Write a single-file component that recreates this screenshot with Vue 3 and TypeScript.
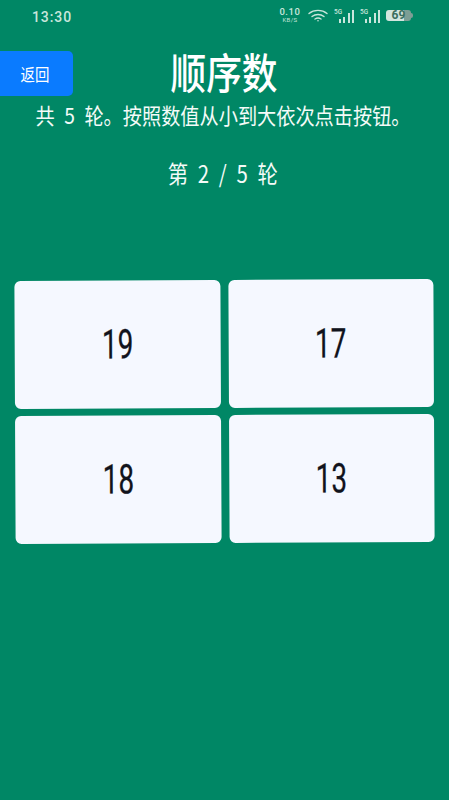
<script setup lang="ts">
const cards: number[] = [19, 17, 18, 13]
const bars = [4, 7, 10, 13]
</script>

<template>
  <main class="page">
    <header class="status">
      <span class="time">13:30</span>
      <div class="indicators">
        <div class="speed"><b>0.10</b><small>KB/S</small></div>
        <svg class="wifi" width="20" height="13" viewBox="0 0 20 13" fill="none" stroke="currentColor" stroke-width="1.4" stroke-linecap="round">
          <path d="M1 4.5C6 .3 14 .3 19 4.5" />
          <path d="M4 7.5c3.400-2.700 8.600-2.700 12 0" />
          <path d="M7 10c1.800-1.200 4.200-1.200 6 0" />
          <circle cx="10" cy="11.700" r=".8" fill="currentColor" stroke="none" />
        </svg>
        <div v-for="n in 2" :key="n" class="signal">
          <i>5G</i>
          <span v-for="h in bars" :key="h" class="bar" :style="{ height: h + 'px' }"></span>
        </div>
        <div class="battery"><span class="level">69</span><span class="cap"></span></div>
      </div>
    </header>

    <button class="back" type="button"><span>返回</span></button>

    <h1 class="title"><span>顺序数</span></h1>
    <p class="intro"><span>共 5 轮。按照数值从小到大依次点击按钮。</span></p>
    <p class="round"><span>第 2 / 5 轮</span></p>

    <section class="grid">
      <button v-for="c in cards" :key="c" class="card" type="button"><span>{{ c }}</span></button>
    </section>
  </main>
</template>

<style scoped>
.page {
  position: relative;
  box-sizing: border-box;
  width: 449px;
  height: 800px;
  overflow: hidden;
  background: #008765;
  color: #f4fbf8;
  font-family: "Noto Sans CJK SC", "Noto Sans", sans-serif;
}
.status {
  box-sizing: border-box;
  height: 34px;
  padding: 7px 36px 0 32px;
  display: flex;
  justify-content: space-between;
  align-items: flex-start;
  color: #c9e6dc;
}
.time {
  font: 500 14px/20px Roboto, sans-serif;
  letter-spacing: 0.9px;
}
.indicators {
  display: flex;
  align-items: center;
  height: 17px;
  gap: 6px;
}
.speed {
  display: flex;
  flex-direction: column;
  align-items: center;
  gap: 1px;
  width: 22px;
  font-family: Roboto, sans-serif;
  line-height: 1;
}
.speed b {
  font-size: 9.500px;
  font-weight: 500;
  line-height: 8px;
  letter-spacing: 0.6px;
}
.speed small {
  font-size: 6px;
  line-height: 6px;
  letter-spacing: 0.4px;
}
.wifi {
  margin: 0 0 0 1px;
}
.signal {
  position: relative;
  display: flex;
  align-items: flex-end;
  justify-content: flex-end;
  gap: 2.500px;
  box-sizing: border-box;
  width: 20px;
  height: 14px;
}
.signal i {
  position: absolute;
  left: 0;
  top: 0;
  font: 500 6.500px/6px Roboto, sans-serif;
}
.bar {
  width: 2px;
  background: currentColor;
}
.bar:nth-of-type(1) { max-height: 5px; }
.bar:nth-of-type(2) { max-height: 6px; }
.battery {
  display: flex;
  align-items: center;
}
.level {
  width: 25px;
  height: 11px;
  border-radius: 3px;
  background: linear-gradient(90deg, #d3e6df 0 72%, #7d9e95 72% 100%);
  color: #3b6f5f;
  font: 700 12px/11px Roboto, sans-serif;
  text-align: center;
}
.cap {
  width: 2px;
  height: 5px;
  border-radius: 0 2px 2px 0;
  background: #7d9e95;
}
.back {
  position: absolute;
  left: 0;
  top: 51px;
  width: 73px;
  height: 45px;
  border: 0;
  border-radius: 0 5px 5px 0;
  padding: 0 3px 0 0;
  background: #0a7bff;
  color: #fff;
  font: 400 17px/45px "Noto Sans CJK SC", sans-serif;
}
.back span {
  display: inline-block;
  transform: scaleX(0.85);
}
.title {
  margin: 9px 0 0;
  height: 56px;
  text-align: center;
  font-size: 42px;
  line-height: 56px;
  font-weight: 500;
  color: #fff;
}
.title span,
.intro span,
.round span,
.card span {
  display: inline-block;
  white-space: nowrap;
}
.title span { transform: scaleX(0.85); }
.intro {
  margin: 0;
  height: 30px;
  padding-right: 2px;
  text-align: center;
  font-size: 22px;
  line-height: 30px;
  font-weight: 400;
}
.intro span {
  transform: scaleX(0.872);
  margin: 0 -40px;
  word-spacing: 6px;
}
.round {
  margin: 27px 0 0;
  height: 34px;
  padding-right: 4px;
  text-align: center;
  font-size: 24px;
  line-height: 34px;
  font-weight: 400;
}
.round span {
  transform: scaleX(0.85);
  word-spacing: 6px;
}
.grid {
  margin: 90px 15px 0;
  width: 419px;
  display: grid;
  grid-template-columns: 205.500px 205.500px;
  grid-auto-rows: 128px;
  gap: 7px 8px;
  transform: rotate(-0.27deg);
}
.card {
  border: 0;
  padding: 0;
  border-radius: 6px;
  background: #f5f8ff;
  color: #11131c;
  font: 400 41px/1 Roboto, sans-serif;
}
.card span {
  transform: scaleX(0.68);
  -webkit-text-stroke: 0.3px #11131c;
}
</style>
